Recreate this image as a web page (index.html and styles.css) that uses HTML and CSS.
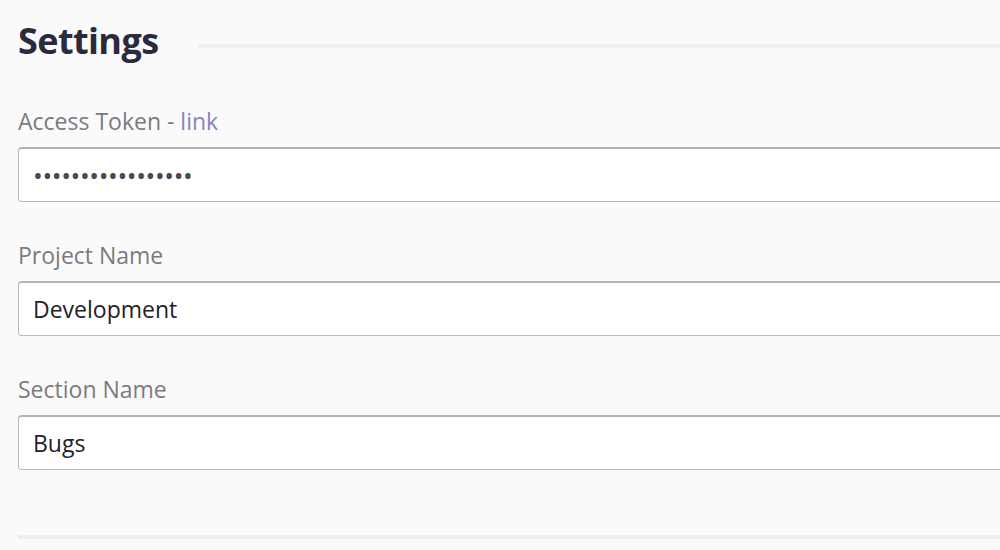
FILE: index.html
```html
<!DOCTYPE html>
<html>
<head>
<meta charset="utf-8">
<link rel="stylesheet" href="styles.css">
</head>
<body>
<div class="page">
  <div class="header">
    <h1 class="title">Settings</h1>
    <div class="rule"></div>
  </div>
  <div class="field">
    <label class="label">Access Token - <a class="link" href="#">link</a></label>
    <div class="input input-password">&#8226;&#8226;&#8226;&#8226;&#8226;&#8226;&#8226;&#8226;&#8226;&#8226;&#8226;&#8226;&#8226;&#8226;&#8226;&#8226;&#8226;</div>
  </div>
  <div class="field">
    <label class="label">Project Name</label>
    <div class="input">Development</div>
  </div>
  <div class="field">
    <label class="label">Section Name</label>
    <div class="input">Bugs</div>
  </div>
  <div class="footer-rule"></div>
</div>
</body>
</html>
```
FILE: styles.css
```css
html, body {
  margin: 0;
  padding: 0;
  background: #fafafa;
  overflow: hidden;
}
.page {
  width: 1100px;
  padding: 18px 0 0 18px;
  font-family: "Open Sans", "Noto Sans", sans-serif;
}
.header {
  display: flex;
  align-items: center;
  height: 46px;
}
.title {
  margin: 0;
  font-size: 36px;
  font-weight: 700;
  color: #2b2a3d;
  line-height: 46px;
  letter-spacing: -0.6px;
}
.rule {
  flex: 1;
  height: 4px;
  background: #efeff2;
  margin-left: 40px;
  margin-top: 10px;
}
.field {
  display: flex;
  flex-direction: column;
}
.label {
  font-size: 23px;
  color: #7b7a80;
  line-height: 30px;
  margin-top: 42px;
  margin-bottom: 11px;
}
.field + .field .label {
  margin-top: 38px;
}
.link {
  color: #8882c6;
  text-decoration: none;
}
.input {
  box-sizing: border-box;
  height: 55px;
  border: 1px solid #b9b9b9;
  border-top: 2px solid #b4b4b4;
  border-radius: 4px;
  background: #fff;
  padding: 0 14px;
  display: flex;
  align-items: center;
  font-size: 23px;
  color: #222229;
}
.input-password {
  color: #4a4950;
  font-size: 26px;
  letter-spacing: -0.4px;
}
.footer-rule {
  margin-top: 65px;
  height: 4px;
  background: #eeeeee;
}
```
